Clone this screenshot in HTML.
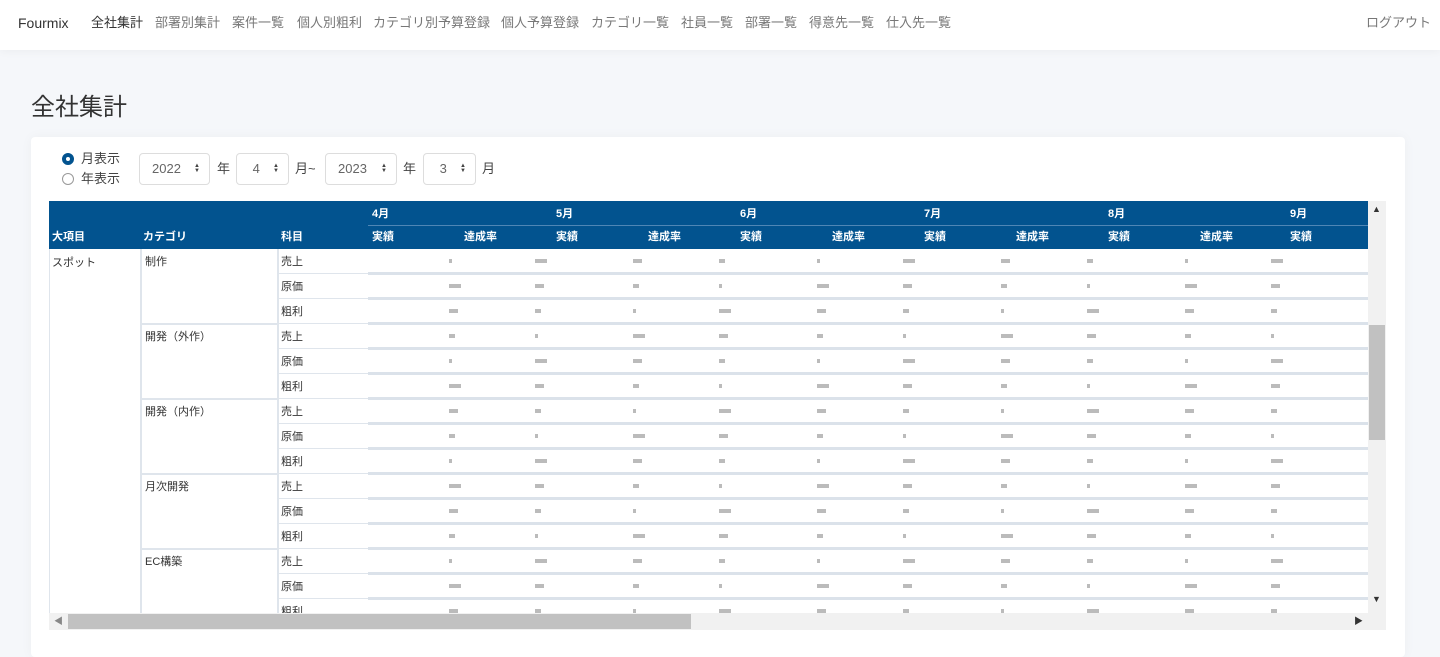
<!DOCTYPE html>
<html><head><meta charset="utf-8">
<style>
*{margin:0;padding:0;box-sizing:border-box}
body{width:1440px;height:648px;overflow:hidden;background:#f5f7fa;font-family:"Liberation Sans","Noto Sans CJK JP",sans-serif;position:relative;color:#333}
.nav{position:absolute;left:0;top:0;width:1440px;height:50px;background:#fff;box-shadow:0 2px 8px rgba(0,0,0,.04)}
.nav span{position:absolute;top:15px;font-size:13px;color:#777;white-space:nowrap;line-height:16px}
h1{position:absolute;left:31px;top:87px;font-size:24px;font-weight:normal;color:#333}
.card{position:absolute;left:31px;top:137px;width:1374px;height:520px;background:#fff;border-radius:4px;box-shadow:0 0 12px rgba(0,0,0,.04)}
.sel{position:absolute;top:153px;height:32px;border:1px solid #ddd;border-radius:4px;font-size:13px;color:#666;line-height:30px;padding-left:12px;display:flex;align-items:center}
.sel i{position:absolute;right:9px;top:10px;font-style:normal;font-size:6px;line-height:5px;color:#444}
.lbl{position:absolute;top:161px;font-size:13px;color:#444;line-height:16px}
.tbl{position:absolute;left:49px;top:201px;width:1319px;height:412px;overflow:hidden;background:#fff}
.hd{position:absolute;left:0;top:0;width:1319px;height:48px;background:#02538f}
.hd span{position:absolute;color:#fff;font-size:11px;font-weight:bold;line-height:13px}
.hline{position:absolute;left:319px;top:24px;width:1000px;height:1px;background:#4f86b5}
.c{position:absolute;font-size:11px;color:#333;line-height:13px}
.vl{position:absolute;width:1px;background:#dfe5ec}
.hl{position:absolute;height:1px;background:#dfe5ec}
.dl{position:absolute;left:319px;width:1000px;height:3px;background:#dbe2ea}
.b{position:absolute;height:4px;background:#bbb}
</style></head><body>
<div class="nav">
<span style="left:18px;font-size:14px;color:#333">Fourmix</span>
<span style="left:91px;color:#333">全社集計</span>
<span style="left:155px">部署別集計</span>
<span style="left:232px">案件一覧</span>
<span style="left:297px">個人別粗利</span>
<span style="left:373px">カテゴリ別予算登録</span>
<span style="left:501px">個人予算登録</span>
<span style="left:591px">カテゴリ一覧</span>
<span style="left:681px">社員一覧</span>
<span style="left:745px">部署一覧</span>
<span style="left:809px">得意先一覧</span>
<span style="left:886px">仕入先一覧</span>
<span style="left:1366px">ログアウト</span>
</div>
<h1>全社集計</h1>
<div class="card"></div>
<div style="position:absolute;left:62px;top:153px;width:12px;height:12px;border-radius:50%;border:4px solid #02538f"></div>
<div class="lbl" style="left:81px;top:151px">月表示</div>
<div style="position:absolute;left:62px;top:173px;width:12px;height:12px;border-radius:50%;border:1px solid #999"></div>
<div class="lbl" style="left:81px;top:171px">年表示</div>
<div class="sel" style="left:139px;width:71px">2022<i>▲<br>▼</i></div>
<div class="lbl" style="left:217px">年</div>
<div class="sel" style="left:236px;width:53px">&nbsp;4<i>▲<br>▼</i></div>
<div class="lbl" style="left:295px">月~</div>
<div class="sel" style="left:325px;width:72px">2023<i>▲<br>▼</i></div>
<div class="lbl" style="left:403px">年</div>
<div class="sel" style="left:423px;width:53px">&nbsp;3<i>▲<br>▼</i></div>
<div class="lbl" style="left:482px">月</div>
<div class="tbl" id="t">
<div class="hd">
<span style="left:3px;top:30px">大項目</span>
<span style="left:94px;top:30px">カテゴリ</span>
<span style="left:232px;top:30px">科目</span>
<span style="left:323px;top:7px">4月</span><span style="left:507px;top:7px">5月</span><span style="left:691px;top:7px">6月</span><span style="left:875px;top:7px">7月</span><span style="left:1059px;top:7px">8月</span><span style="left:1241px;top:7px">9月</span>
<span style="left:323px;top:30px">実績</span><span style="left:415px;top:30px">達成率</span>
<span style="left:507px;top:30px">実績</span><span style="left:599px;top:30px">達成率</span>
<span style="left:691px;top:30px">実績</span><span style="left:783px;top:30px">達成率</span>
<span style="left:875px;top:30px">実績</span><span style="left:967px;top:30px">達成率</span>
<span style="left:1059px;top:30px">実績</span><span style="left:1151px;top:30px">達成率</span>
<span style="left:1241px;top:30px">実績</span>
<div class="hline"></div>
</div>
<div class="c" style="left:3px;top:56px">スポット</div>
<div class="c" style="left:96px;top:55px">制作</div>
<div class="c" style="left:96px;top:130px">開発（外作）</div>
<div class="c" style="left:96px;top:205px">開発（内作）</div>
<div class="c" style="left:96px;top:280px">月次開発</div>
<div class="c" style="left:96px;top:355px">EC構築</div>
<div class="c" style="left:232px;top:55px">売上</div><div class="c" style="left:232px;top:80px">原価</div><div class="c" style="left:232px;top:105px">粗利</div>
<div class="c" style="left:232px;top:130px">売上</div><div class="c" style="left:232px;top:155px">原価</div><div class="c" style="left:232px;top:180px">粗利</div>
<div class="c" style="left:232px;top:205px">売上</div><div class="c" style="left:232px;top:230px">原価</div><div class="c" style="left:232px;top:255px">粗利</div>
<div class="c" style="left:232px;top:280px">売上</div><div class="c" style="left:232px;top:305px">原価</div><div class="c" style="left:232px;top:330px">粗利</div>
<div class="c" style="left:232px;top:355px">売上</div><div class="c" style="left:232px;top:380px">原価</div><div class="c" style="left:232px;top:405px">粗利</div>
<div class="vl" style="left:0;top:48px;height:400px"></div>
<div class="vl" style="left:91px;top:48px;height:400px;width:2px"></div>
<div class="vl" style="left:228px;top:48px;height:400px;width:2px"></div>
</div>
<div style="position:absolute;left:1368px;top:201px;width:18px;height:412px;background:#f1f1f1"></div>
<div style="position:absolute;left:1369px;top:325px;width:16px;height:115px;background:#c1c1c1"></div>
<div style="position:absolute;left:1372px;top:204px;font-size:9px;color:#333">▲</div>
<div style="position:absolute;left:1372px;top:594px;font-size:9px;color:#333">▼</div>
<div style="position:absolute;left:49px;top:613px;width:1337px;height:17px;background:#f1f1f1"></div>
<div style="position:absolute;left:68px;top:614px;width:623px;height:15px;background:#c1c1c1"></div>
<div style="position:absolute;left:54px;top:614px;font-size:9px;color:#888">◀</div>
<div style="position:absolute;left:1354px;top:614px;font-size:9px;color:#333">▶</div>
<script>
var t=document.getElementById('t'),h='';
for(var r=0;r<15;r++){var y=48+r*25;
 h+='<div class="hl" style="left:230px;top:'+(y+24)+'px;width:89px"></div>';
 if(r%3==2)h+='<div class="hl" style="left:93px;top:'+(y+24)+'px;width:137px;height:2px"></div>';
 h+='<div class="dl" style="top:'+(y+23)+'px"></div>';
 for(var c=0;c<10;c++){var x=400+c*92-(c%2?6:0);var w=3+((r*7+c*3)%4)*3;h+='<div class="b" style="left:'+x+'px;top:'+(y+10)+'px;width:'+w+'px"></div>';}
}
t.insertAdjacentHTML('beforeend',h);
</script>
</body></html>
